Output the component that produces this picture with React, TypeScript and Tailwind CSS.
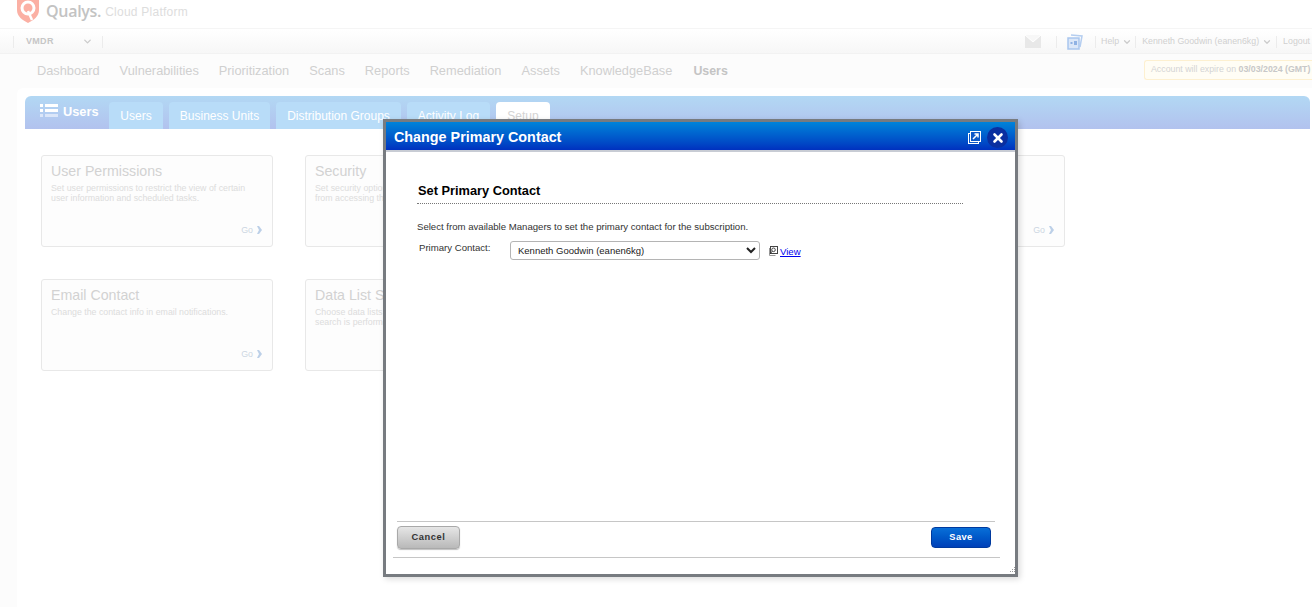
import { ChevronDown, X } from "lucide-react"

const navItems = ["Dashboard", "Vulnerabilities", "Prioritization", "Scans", "Reports", "Remediation", "Assets", "KnowledgeBase"]
const tabs = [
  { name: "Users", width: "w-[54px]" },
  { name: "Business Units", width: "w-[101px]" },
  { name: "Distribution Groups", width: "w-[125px]" },
  { name: "Activity Log", width: "w-[83px]" },
]

const cards = [
  [
    { title: "User Permissions", text: ["Set user permissions to restrict the view of certain", "user information and scheduled tasks."] },
    { title: "Security", text: ["Set security options to prevent users", "from accessing the application."] },
    { title: "", text: [] },
    { title: "", text: [] },
  ],
  [
    { title: "Email Contact", text: ["Change the contact info in email notifications."] },
    { title: "Data List Settings", text: ["Choose data lists to show when a", "search is performed."] },
  ],
]

function SetupCard({ title, text }: { title: string; text: string[] }) {
  return (
    <div className="relative h-[92px] w-[232px] rounded-[3px] border border-[#e8e8e8] bg-[#fdfdfd] pl-[9px] pt-[7px]">
      <div className="text-[14.2px] leading-[17px] text-[#d2d2d2]">{title}</div>
      <div className="mt-[3px] text-[8.8px] leading-[10px] text-[#dcdcdc]">
        {text.map((line) => (
          <div key={line}>{line}</div>
        ))}
      </div>
      <div className="absolute bottom-[11px] right-[10px] flex items-center gap-[4px] text-[8.8px] leading-[10px] text-[#ccd6e2]">
        Go
        <svg width="5" height="8" viewBox="0 0 5 8">
          <path d="M0 0h2l3 4-3 4H0l2-4z" fill="#bcd0e8" />
        </svg>
      </div>
    </div>
  )
}

function QualysLogo() {
  return (
    <svg width="22" height="24" viewBox="0 0 22 24" className="-mt-[1px]">
      <path d="M0 0h22v11c0 6-5 10-11 13C5 21 0 17 0 11z" fill="#fbb0a4" />
      <circle cx="11" cy="9" r="6" fill="none" stroke="#fff" strokeWidth="3" />
      <path d="M11 12l4 9" stroke="#fff" strokeWidth="2.5" />
    </svg>
  )
}

export default function App() {
  return (
    <div className="relative h-[607px] w-[1312px] overflow-hidden bg-[#fcfcfc] font-['Liberation_Sans',Arial,sans-serif]">
      {/* header */}
      <div className="flex h-[29px] items-start border-b border-[#f5f5f5] bg-white pl-[17px]">
        <QualysLogo />
        <span className="ml-[7px] mt-[1px] font-['Open_Sans',sans-serif] text-[16px] font-semibold leading-[20px] tracking-[-0.3px] text-[#c3c3c3]">Qualys.</span>
        <span className="ml-[4px] mt-[5px] text-[12px] leading-[14px] tracking-[0.25px] text-[#dddddd]">Cloud Platform</span>
      </div>

      {/* module bar */}
      <div className="flex h-[25px] items-center border-b border-[#f2f2f2] bg-gradient-to-b from-white to-[#f7f7f7] pl-[13px] pr-[2px] pt-[1px]">
        <div className="flex h-[12px] w-[90px] items-center border-x border-[#ececec] pl-[12px]">
          <span className="w-[56px] text-[9px] font-bold tracking-[0.3px] text-[#c6c6c6]">VMDR</span>
          <ChevronDown className="h-[11px] w-[11px] text-[#cccccc]" strokeWidth={3} />
        </div>
        <div className="ml-auto flex items-center text-[8.8px] text-[#d0d0d0]">
          <svg width="16" height="13" viewBox="0 0 16 13" className="mr-[15px]">
            <rect width="16" height="13" fill="#e8e8e8" />
            <path d="M0 0l8 7 8-7" fill="#f7f7f7" stroke="#fff" strokeWidth="1" />
          </svg>
          <div className="mr-[10px] h-[12px] w-px bg-[#ececec]" />
          <svg width="16" height="16" viewBox="0 0 16 16" className="mr-[12px]">
            <path d="M4 1l11 1-2 11" fill="none" stroke="#b5cef0" strokeWidth="1.5" />
            <rect x="1" y="4" width="11" height="11" fill="#dbe7f8" stroke="#a9c6ee" strokeWidth="1.5" />
            <rect x="3.5" y="8" width="2" height="2" fill="#8fb2e4" />
            <rect x="7" y="7" width="3" height="4" fill="#8fb2e4" />
          </svg>
          <div className="mr-[5px] h-[12px] w-px bg-[#ececec]" />
          <span>Help</span>
          <ChevronDown className="ml-[3px] mr-[3px] h-[10px] w-[10px] text-[#cccccc]" strokeWidth={3} />
          <div className="mr-[6px] h-[12px] w-px bg-[#ececec]" />
          <span>Kenneth Goodwin (eanen6kg)</span>
          <ChevronDown className="ml-[3px] mr-[4px] h-[10px] w-[10px] text-[#cccccc]" strokeWidth={3} />
          <div className="mr-[6px] h-[12px] w-px bg-[#ececec]" />
          <span>Logout</span>
        </div>
      </div>

      {/* nav */}
      <div className="flex h-[34px] items-center pb-[1px] pl-[37px]">
        <div className="flex items-baseline gap-[20px] text-[12.8px] text-[#d0d0d0]">
          {navItems.map((item) => (
            <span key={item}>{item}</span>
          ))}
          <span className="ml-[1px] text-[12.4px] font-bold text-[#c4c4c4]">Users</span>
        </div>
        <div className="mb-[1px] ml-auto flex h-[20px] w-[168px] items-center rounded-l-[3px] border-y border-l border-[#fdf0d0] bg-[#fffdf5] pl-[6px] text-[8.8px] text-[#d4d4d4]">
          Account will expire on&nbsp;<span className="font-bold text-[#c8c8c8]">03/03/2024</span>&nbsp;<span className="font-bold text-[#c8c8c8]">(GMT)</span>
        </div>
      </div>

      {/* main panel */}
      <div className="ml-[17px] h-[519px] rounded-tl-[6px] bg-white pl-[8px] pt-[8px]">
        <div className="flex h-[33px] w-[1285px] items-end rounded-t-[6px] bg-gradient-to-b from-[#b2d8f4] to-[#b2c2ee] pl-[15px]">
          <div className="mb-[8px] flex w-[69px] items-center gap-[5px] text-[12.8px] font-bold text-white">
            <svg width="18" height="16" viewBox="0 0 18 16">
              <g fill="#fff">
                <rect x="0" y="1" width="3" height="3" />
                <rect x="5" y="1" width="13" height="3" />
                <rect x="0" y="6" width="3" height="3" />
                <rect x="5" y="6" width="13" height="3" />
              </g>
              <g fill="#dbe6f9">
                <rect x="0" y="11" width="3" height="3" />
                <rect x="5" y="11" width="13" height="3" />
              </g>
            </svg>
            Users
          </div>
          <div className="flex gap-[6px]">
            {tabs.map((tab) => (
              <div
                key={tab.name}
                className={`flex h-[27px] items-center justify-center rounded-t-[4px] bg-[#b8dcf8] text-[12px] text-white ${tab.width}`}
              >
                {tab.name}
              </div>
            ))}
            <div className="flex h-[27px] w-[54px] items-center justify-center rounded-t-[4px] bg-white text-[12px] text-[#d4d4d4]">Setup</div>
          </div>
        </div>

        <div className="ml-[16px] mt-[26px] flex flex-col gap-[32px]">
          {cards.map((row, i) => (
            <div key={i} className="flex gap-[32px]">
              {row.map((card, j) => (
                <SetupCard key={j} title={card.title} text={card.text} />
              ))}
            </div>
          ))}
        </div>
      </div>

      {/* modal */}
      <div className="absolute left-[383px] top-[119px] flex h-[458px] w-[635px] flex-col border-[3px] border-[#777b80] bg-white shadow-[2px_2px_6px_rgba(0,0,0,0.15)]">
        <div className="flex h-[30px] shrink-0 items-center border-b-2 border-[#c8ccd4] bg-gradient-to-b from-[#0083d9] to-[#0030bf] pl-[8px] pr-[7px] pt-[3px]">
          <span className="text-[14.35px] font-bold text-white">Change Primary Contact</span>
          <svg width="13" height="13" viewBox="0 0 13 13" className="ml-auto">
            <rect x="0.5" y="2.5" width="10" height="10" fill="#0c58c8" stroke="#fff" />
            <rect x="2.5" y="0.5" width="10" height="10" fill="#0c58c8" stroke="#fff" />
            <path d="M5 8l5-5M6.5 3H10v3.5" fill="none" stroke="#fff" strokeWidth="1.5" />
          </svg>
          <div className="ml-[6px] flex h-[21px] w-[21px] items-center justify-center rounded-full bg-[#0a2fa0]">
            <X className="h-[14px] w-[14px] text-white" strokeWidth={4.5} />
          </div>
        </div>

        <div className="flex min-h-0 flex-1 flex-col">
          <div className="pl-[31px] pt-[31px]">
            <div className="w-[546px] border-b border-dotted border-[#777777] pb-[4px] pl-[1px] text-[12.8px] font-bold leading-[16px] text-black">
              Set Primary Contact
            </div>
            <div className="mt-[17px] text-[9.6px] leading-[11px] text-[#333333]">
              Select from available Managers to set the primary contact for the subscription.
            </div>
            <div className="mt-[9px] flex items-start">
              <span className="ml-[2px] w-[91px] pt-[1px] text-[9.6px] leading-[11px] text-[#333333]">Primary Contact:</span>
              <select
                defaultValue="eanen6kg"
                className="h-[19px] w-[250px] rounded-[3px] border border-[#b4b4b4] bg-white pl-[3px] text-[9.5px] text-[#222222]"
              >
                <option value="eanen6kg">Kenneth Goodwin (eanen6kg)</option>
              </select>
              <svg width="9" height="10" viewBox="0 0 9 10" className="ml-[9px] mt-[5px]">
                <rect x="1.5" y="0.5" width="7" height="7" fill="#fff" stroke="#444" />
                <path d="M0.5 2v7.5h6" fill="none" stroke="#999" />
                <circle cx="4.5" cy="3.8" r="1.8" fill="none" stroke="#444" />
                <path d="M3.2 5.2L1 8" stroke="#333" />
              </svg>
              <span className="ml-[2px] pt-[5px] text-[9.6px] leading-[11px] text-[#0000ee] underline">View</span>
            </div>
          </div>

          <div className="mt-auto">
            <div className="ml-[11px] mr-[20px] border-t border-[#c6c6c6]" />
            <div className="ml-[11px] mr-[24px] flex h-[35px] items-center justify-between pb-[4px]">
              <button className="h-[23px] w-[63px] rounded-[4px] border border-[#a9a9a9] bg-gradient-to-b from-[#e6e6e6] to-[#b9b9b9] text-[9.3px] font-bold tracking-[0.6px] text-[#333333] shadow-[0_1px_1px_rgba(0,0,0,0.25)]">
                Cancel
              </button>
              <button className="h-[21px] w-[60px] rounded-[4px] border border-[#003a9e] bg-gradient-to-b from-[#0a6fd8] to-[#0040b8] text-[9.3px] font-bold tracking-[0.4px] text-white">
                Save
              </button>
            </div>
            <div className="ml-[7px] mr-[15px] border-t border-[#c6c6c6]" />
            <div className="relative h-[16px]">
              <svg width="6" height="6" viewBox="0 0 6 6" className="absolute bottom-[1px] right-0">
                <path d="M5 0h1v1H5zM3 2h1v1H3zM5 2h1v1H5zM1 4h1v1H1zM3 4h1v1H3zM5 4h1v1H5z" fill="#9a9a9a" />
              </svg>
            </div>
          </div>
        </div>
      </div>
    </div>
  )
}
